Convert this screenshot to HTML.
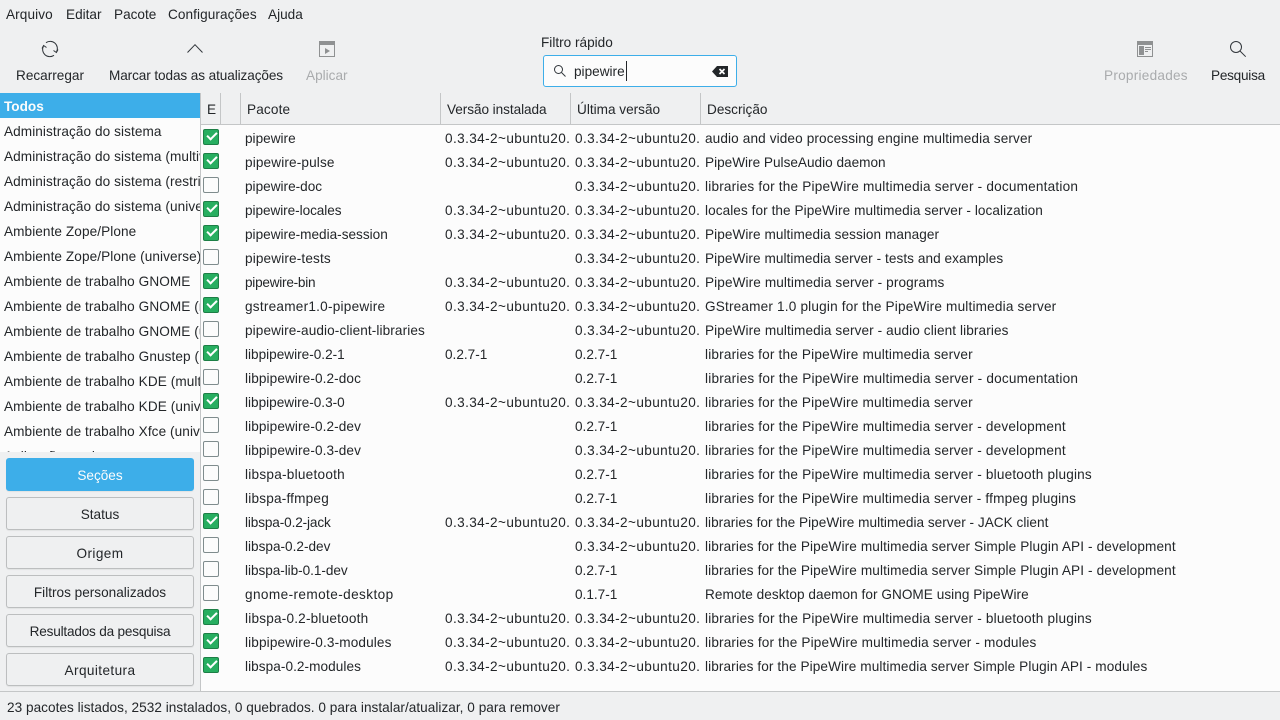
<!DOCTYPE html>
<html lang="pt"><head><meta charset="utf-8"><title>Synaptic</title>
<style>
html,body{margin:0;padding:0}
body{width:1280px;height:720px;position:relative;overflow:hidden;background:#eff0f1;color:#232629;font:13.6px/18px "Liberation Sans",sans-serif}
.t{position:absolute;white-space:nowrap}
.g{color:#a9abad}
svg{position:absolute;overflow:visible}
#side{position:absolute;left:0;top:93px;width:200px;height:359px;background:#fcfcfc;overflow:hidden}
#side div{position:absolute;left:4px;width:196px;overflow:hidden;white-space:nowrap;height:18px;letter-spacing:.08px}
#side .h{left:0;top:0;width:200px;height:25px;background:#3daee9;color:#fcfcfc;font-weight:bold;line-height:27px;padding-left:4px;box-sizing:border-box;letter-spacing:0}
.b{position:absolute;left:6px;width:188px;height:33px;box-sizing:border-box;border:1px solid #bcbebf;border-radius:3px;background:#eff0f1;text-align:center;line-height:33px;box-shadow:0 1px 1px rgba(0,0,0,.06)}
.b.on{background:#3daee9;border-color:#3daee9;color:#fcfcfc}
#tbl{position:absolute;left:201px;top:125px;width:1079px;height:566px;background:#fcfcfc}
.r{position:absolute;left:0;width:1079px;height:24px;line-height:26px}
.r span{position:absolute;white-space:nowrap;overflow:hidden;top:0;height:24px}
.r .p{left:44px;width:195px}
.r .v{left:244px;width:125px;letter-spacing:.39px}
.r .w{left:374px;width:125px;letter-spacing:.39px}
.r .n{letter-spacing:0}
.r .d{left:504px;width:570px}
.r i{position:absolute;left:2px;top:3px;width:16px;height:16px;box-sizing:border-box;border:1px solid #7f8c8d;border-radius:2px;background:#fcfcfc}
.r i.c{background:#27ae60;border-color:#1d7f46}
.r i.c:after{content:"";position:absolute;left:3px;top:2px;width:8px;height:4px;border-left:2px solid #fff;border-bottom:2px solid #fff;transform:rotate(-45deg)}
.hd{position:absolute;top:93px;height:31px;line-height:33px;white-space:nowrap}
.sep{position:absolute;top:93px;width:1px;height:31px;background:#c4c6c7}
</style></head><body>
<span class="t" style="left:6px;top:6px;letter-spacing:.1px">Arquivo</span>
<span class="t" style="left:66px;top:6px">Editar</span>
<span class="t" style="left:114px;top:6px">Pacote</span>
<span class="t" style="left:168px;top:6px;letter-spacing:.08px">Configurações</span>
<span class="t" style="left:268px;top:6px">Ajuda</span>

<svg style="left:42px;top:41px" width="16" height="16" viewBox="0 0 16 16" fill="none" stroke="#31363b" stroke-width="1"><path d="M1.500 5A7.200 7.200 0 0 0 12 14.300M14.500 11A7.200 7.200 0 0 0 4 1.700"/><path d="M0 7.500L1.600 4.500 4.500 6.500M16 8.500L14.400 11.500 11.500 9.500"/></svg>
<svg style="left:187px;top:44px" width="16" height="9" viewBox="0 0 16 9" fill="none" stroke="#31363b" stroke-width="1"><path d="M.5 8.500L8 .7l7.500 7.800"/></svg>
<svg style="left:319px;top:41px" width="16" height="16" viewBox="0 0 16 16"><path fill="#8f9192" d="M0 0h16v16H0z"/><path fill="#eff0f1" d="M1 4h14v11H1z"/><path fill="#8f9192" d="M6 7l5 3-5 3z"/></svg>
<svg style="left:1137px;top:41px" width="16" height="16" viewBox="0 0 16 16"><path fill="#8f9192" d="M0 0h16v16H0z"/><path fill="#eff0f1" d="M1 4h14v11H1z"/><path fill="#8f9192" d="M2 5h5v9H2zM8 6h6v1H8zM8 8h6v1H8zM8 10h3v1H8z"/></svg>
<svg style="left:1230px;top:41px" width="16" height="16" viewBox="0 0 16 16" fill="none" stroke="#31363b" stroke-width="1"><circle cx="6" cy="6" r="5.500"/><path d="M10 10l5.700 5.700"/></svg>

<span class="t" style="left:16px;top:67px">Recarregar</span>
<span class="t" style="left:109px;top:67px;letter-spacing:-.1px">Marcar todas as atualizações</span>
<span class="t g" style="left:306px;top:67px">Aplicar</span>
<span class="t" style="left:541px;top:34px">Filtro rápido</span>
<span class="t g" style="left:1104px;top:67px;letter-spacing:.25px">Propriedades</span>
<span class="t" style="left:1211px;top:67px;letter-spacing:-.25px">Pesquisa</span>

<div style="position:absolute;left:543px;top:55px;width:194px;height:32px;box-sizing:border-box;border:1px solid #3daee9;border-radius:3px;background:#fcfcfc"></div>
<svg style="left:554px;top:65px" width="12" height="12" viewBox="0 0 12 12" fill="none" stroke="#31363b" stroke-width="1"><circle cx="4.500" cy="4.500" r="4"/><path d="M7.500 7.500l4 4"/></svg>
<span class="t" style="left:574px;top:63px">pipewire</span>
<div style="position:absolute;left:626px;top:61px;width:1px;height:20px;background:#232629"></div>
<svg style="left:712px;top:66px" width="16" height="11" viewBox="0 0 16 11"><path fill="#232629" d="M5 0h11v11H5L0 5.500z"/><path stroke="#fcfcfc" stroke-width="1.700" d="M7.500 3l5 5M12.500 3l-5 5"/></svg>

<div id="side">
<div class="h">Todos</div>
<div style="top:30px">Administração do sistema</div>
<div style="top:55px">Administração do sistema (multiverse)</div>
<div style="top:80px">Administração do sistema (restricted)</div>
<div style="top:105px">Administração do sistema (universe)</div>
<div style="top:130px">Ambiente Zope/Plone</div>
<div style="top:155px">Ambiente Zope/Plone (universe)</div>
<div style="top:180px">Ambiente de trabalho GNOME</div>
<div style="top:205px">Ambiente de trabalho GNOME (multiverse)</div>
<div style="top:230px">Ambiente de trabalho GNOME (universe)</div>
<div style="top:255px">Ambiente de trabalho Gnustep (universe)</div>
<div style="top:280px">Ambiente de trabalho KDE (multiverse)</div>
<div style="top:305px">Ambiente de trabalho KDE (universe)</div>
<div style="top:330px">Ambiente de trabalho Xfce (universe)</div>
<div style="top:355px">Aplicações web</div>
</div>

<div class="b on" style="top:458px">Seções</div>
<div class="b" style="top:497px">Status</div>
<div class="b" style="top:536px;letter-spacing:.4px">Origem</div>
<div class="b" style="top:575px">Filtros personalizados</div>
<div class="b" style="top:614px;letter-spacing:-.2px">Resultados da pesquisa</div>
<div class="b" style="top:653px;letter-spacing:.4px">Arquitetura</div>

<div class="sep" style="left:200px;height:598px"></div>
<div class="sep" style="left:220px"></div>
<div class="sep" style="left:240px"></div>
<div class="sep" style="left:440px"></div>
<div class="sep" style="left:570px"></div>
<div class="sep" style="left:700px"></div>
<div style="position:absolute;left:201px;top:124px;width:1079px;height:1px;background:#c4c6c7"></div>
<span class="hd" style="left:207px">E</span>
<span class="hd" style="left:247px;letter-spacing:.15px">Pacote</span>
<span class="hd" style="left:447px;letter-spacing:-.06px">Versão instalada</span>
<span class="hd" style="left:577px">Última versão</span>
<span class="hd" style="left:707px">Descrição</span>

<div id="tbl">
<div class="r" style="top:1px"><i class="c"></i><span class="p">pipewire</span><span class="v">0.3.34-2~ubuntu20.</span><span class="w">0.3.34-2~ubuntu20.</span><span class="d" style="letter-spacing:.12px">audio and video processing engine multimedia server</span></div>
<div class="r" style="top:25px"><i class="c"></i><span class="p" style="letter-spacing:.14px">pipewire-pulse</span><span class="v">0.3.34-2~ubuntu20.</span><span class="w">0.3.34-2~ubuntu20.</span><span class="d">PipeWire PulseAudio daemon</span></div>
<div class="r" style="top:49px"><i></i><span class="p">pipewire-doc</span><span class="w">0.3.34-2~ubuntu20.</span><span class="d" style="letter-spacing:.2px">libraries for the PipeWire multimedia server - documentation</span></div>
<div class="r" style="top:73px"><i class="c"></i><span class="p" style="letter-spacing:-.06px">pipewire-locales</span><span class="v">0.3.34-2~ubuntu20.</span><span class="w">0.3.34-2~ubuntu20.</span><span class="d" style="letter-spacing:.07px">locales for the PipeWire multimedia server - localization</span></div>
<div class="r" style="top:97px"><i class="c"></i><span class="p">pipewire-media-session</span><span class="v">0.3.34-2~ubuntu20.</span><span class="w">0.3.34-2~ubuntu20.</span><span class="d" style="letter-spacing:.06px">PipeWire multimedia session manager</span></div>
<div class="r" style="top:121px"><i></i><span class="p" style="letter-spacing:.14px">pipewire-tests</span><span class="w">0.3.34-2~ubuntu20.</span><span class="d" style="letter-spacing:.06px">PipeWire multimedia server - tests and examples</span></div>
<div class="r" style="top:145px"><i class="c"></i><span class="p" style="letter-spacing:-.25px">pipewire-bin</span><span class="v">0.3.34-2~ubuntu20.</span><span class="w">0.3.34-2~ubuntu20.</span><span class="d" style="letter-spacing:.1px">PipeWire multimedia server - programs</span></div>
<div class="r" style="top:169px"><i class="c"></i><span class="p" style="letter-spacing:.24px">gstreamer1.0-pipewire</span><span class="v">0.3.34-2~ubuntu20.</span><span class="w">0.3.34-2~ubuntu20.</span><span class="d" style="letter-spacing:.18px">GStreamer 1.0 plugin for the PipeWire multimedia server</span></div>
<div class="r" style="top:193px"><i></i><span class="p" style="letter-spacing:.1px">pipewire-audio-client-libraries</span><span class="w">0.3.34-2~ubuntu20.</span><span class="d" style="letter-spacing:.1px">PipeWire multimedia server - audio client libraries</span></div>
<div class="r" style="top:217px"><i class="c"></i><span class="p">libpipewire-0.2-1</span><span class="v n">0.2.7-1</span><span class="w n">0.2.7-1</span><span class="d" style="letter-spacing:.18px">libraries for the PipeWire multimedia server</span></div>
<div class="r" style="top:241px"><i></i><span class="p" style="letter-spacing:.1px">libpipewire-0.2-doc</span><span class="w n">0.2.7-1</span><span class="d" style="letter-spacing:.2px">libraries for the PipeWire multimedia server - documentation</span></div>
<div class="r" style="top:265px"><i class="c"></i><span class="p">libpipewire-0.3-0</span><span class="v">0.3.34-2~ubuntu20.</span><span class="w">0.3.34-2~ubuntu20.</span><span class="d" style="letter-spacing:.18px">libraries for the PipeWire multimedia server</span></div>
<div class="r" style="top:289px"><i></i><span class="p" style="letter-spacing:.1px">libpipewire-0.2-dev</span><span class="w n">0.2.7-1</span><span class="d" style="letter-spacing:.19px">libraries for the PipeWire multimedia server - development</span></div>
<div class="r" style="top:313px"><i></i><span class="p" style="letter-spacing:.1px">libpipewire-0.3-dev</span><span class="w">0.3.34-2~ubuntu20.</span><span class="d" style="letter-spacing:.19px">libraries for the PipeWire multimedia server - development</span></div>
<div class="r" style="top:337px"><i></i><span class="p" style="letter-spacing:.25px">libspa-bluetooth</span><span class="w n">0.2.7-1</span><span class="d" style="letter-spacing:.19px">libraries for the PipeWire multimedia server - bluetooth plugins</span></div>
<div class="r" style="top:361px"><i></i><span class="p" style="letter-spacing:.2px">libspa-ffmpeg</span><span class="w n">0.2.7-1</span><span class="d" style="letter-spacing:.18px">libraries for the PipeWire multimedia server - ffmpeg plugins</span></div>
<div class="r" style="top:385px"><i class="c"></i><span class="p" style="letter-spacing:-.13px">libspa-0.2-jack</span><span class="v">0.3.34-2~ubuntu20.</span><span class="w">0.3.34-2~ubuntu20.</span><span class="d" style="letter-spacing:.02px">libraries for the PipeWire multimedia server - JACK client</span></div>
<div class="r" style="top:409px"><i></i><span class="p">libspa-0.2-dev</span><span class="w">0.3.34-2~ubuntu20.</span><span class="d" style="letter-spacing:.12px">libraries for the PipeWire multimedia server Simple Plugin API - development</span></div>
<div class="r" style="top:433px"><i></i><span class="p" style="letter-spacing:-.05px">libspa-lib-0.1-dev</span><span class="w n">0.2.7-1</span><span class="d" style="letter-spacing:.12px">libraries for the PipeWire multimedia server Simple Plugin API - development</span></div>
<div class="r" style="top:457px"><i></i><span class="p" style="letter-spacing:.4px">gnome-remote-desktop</span><span class="w n">0.1.7-1</span><span class="d" style="letter-spacing:.04px">Remote desktop daemon for GNOME using PipeWire</span></div>
<div class="r" style="top:481px"><i class="c"></i><span class="p" style="letter-spacing:.2px">libspa-0.2-bluetooth</span><span class="v">0.3.34-2~ubuntu20.</span><span class="w">0.3.34-2~ubuntu20.</span><span class="d" style="letter-spacing:.19px">libraries for the PipeWire multimedia server - bluetooth plugins</span></div>
<div class="r" style="top:505px"><i class="c"></i><span class="p" style="letter-spacing:.13px">libpipewire-0.3-modules</span><span class="v">0.3.34-2~ubuntu20.</span><span class="w">0.3.34-2~ubuntu20.</span><span class="d" style="letter-spacing:.15px">libraries for the PipeWire multimedia server - modules</span></div>
<div class="r" style="top:529px"><i class="c"></i><span class="p" style="letter-spacing:.06px">libspa-0.2-modules</span><span class="v">0.3.34-2~ubuntu20.</span><span class="w">0.3.34-2~ubuntu20.</span><span class="d" style="letter-spacing:.1px">libraries for the PipeWire multimedia server Simple Plugin API - modules</span></div>
</div>
<div style="position:absolute;left:0;top:691px;width:1280px;height:1px;background:#c4c6c7"></div>
<span class="t" style="left:7px;top:699px;letter-spacing:.03px">23 pacotes listados, 2532 instalados, 0 quebrados. 0 para instalar/atualizar, 0 para remover</span>
</body></html>
